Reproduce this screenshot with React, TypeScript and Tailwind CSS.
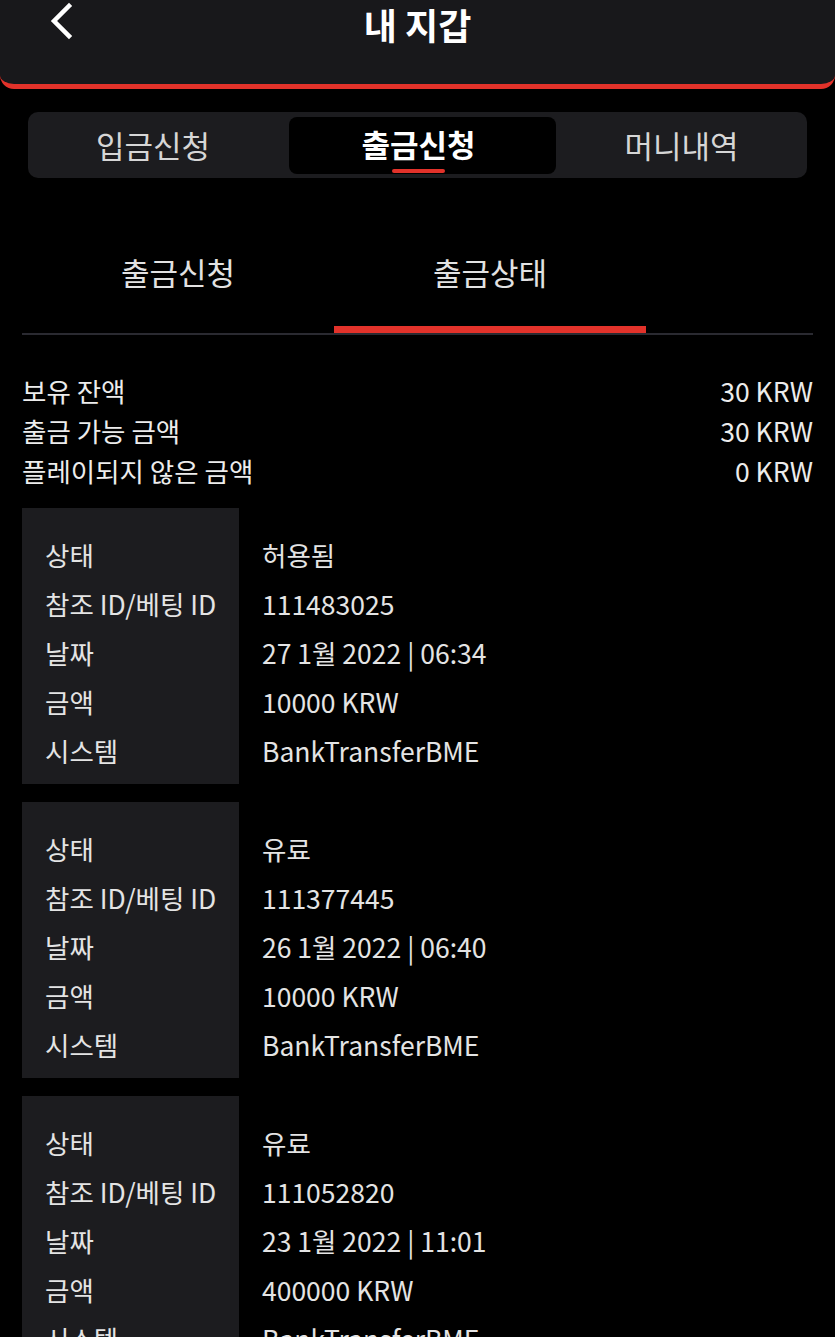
import React from 'react';

const font = { fontFamily: '"Noto Sans CJK KR", "Noto Sans", sans-serif' };

const balances = [
  { label: '보유 잔액', value: '30 KRW' },
  { label: '출금 가능 금액', value: '30 KRW' },
  { label: '플레이되지 않은 금액', value: '0 KRW' },
];

const records = [
  { status: '허용됨', id: '111483025', date: '27 1월 2022 | 06:34', amount: '10000 KRW', system: 'BankTransferBME' },
  { status: '유료', id: '111377445', date: '26 1월 2022 | 06:40', amount: '10000 KRW', system: 'BankTransferBME' },
  { status: '유료', id: '111052820', date: '23 1월 2022 | 11:01', amount: '400000 KRW', system: 'BankTransferBME' },
];

const labels = ['상태', '참조 ID/베팅 ID', '날짜', '금액', '시스템'];

const RecordCard = ({ r }: { r: (typeof records)[number] }) => {
  const values = [r.status, r.id, r.date, r.amount, r.system];
  return (
    <div className="flex text-[26.5px] text-[#e4e4e4]">
      <div className="w-[217px] shrink-0 bg-[#1c1c1f] pt-[22px] pb-[9px] pl-[23px]">
        {labels.map((l) => (
          <div key={l} className="h-[49px] leading-[49px] whitespace-nowrap">{l}</div>
        ))}
      </div>
      <div className="flex-1 pt-[22px] pb-[9px] pl-[23px]">
        {values.map((v, i) => (
          <div key={i} className="h-[49px] leading-[49px] whitespace-nowrap">{v}</div>
        ))}
      </div>
    </div>
  );
};

export default function App() {
  return (
    <div className="min-h-screen bg-black overflow-hidden" style={font}>
      {/* header */}
      <header className="h-[89px] bg-[#18181b] rounded-b-[14px] border-b-[5px] border-[#e2322a] flex items-start justify-center relative">
        <button className="absolute left-[46px] top-[1px] w-[30px] h-[40px] flex items-center justify-center">
          <svg width="24" height="38" viewBox="0 0 24 38" fill="none">
            <path d="M20 4 L5 19 L20 34" stroke="white" strokeWidth="4.5" strokeLinecap="square" />
          </svg>
        </button>
        <h1 className="text-[36px] font-bold text-white leading-[44px] mt-[2px]">내 지갑</h1>
      </header>

      {/* main tabs */}
      <div className="mx-[28px] mt-[23px] h-[66px] rounded-[10px] bg-[#1c1c1f] flex pt-[5px] pb-[4px]">
        <div className="w-[250px] flex items-center justify-center text-[31px] text-[#d6d6d6]">입금신청</div>
        <div className="ml-[11px] w-[267px] rounded-[8px] bg-black flex flex-col items-center pr-[8px]">
          <span className="flex-1 flex items-center text-[31px] font-bold text-white pt-[2px]">출금신청</span>
          <span className="w-[53px] h-[4px] rounded-full bg-[#e2322a] mb-[1px]" />
        </div>
        <div className="flex-1 flex items-center justify-center text-[31px] text-[#d6d6d6]">머니내역</div>
      </div>

      <div className="px-[22px]">
        {/* sub tabs */}
        <div className="mt-[42px] flex border-b-2 border-[#2a2a31]">
          <div className="w-[312px] h-[113px] flex flex-col items-center">
            <span className="pt-[32px] leading-[40px] text-[31px] text-[#e2e2e2]">출금신청</span>
          </div>
          <div className="w-[312px] h-[113px] flex flex-col items-center">
            <span className="pt-[32px] leading-[40px] text-[31px] text-[#e2e2e2]">출금상태</span>
            <span className="mt-auto w-full h-[7px] bg-[#e2322a]" />
          </div>
        </div>

        {/* balance */}
        <div className="mt-[36px]">
          {balances.map((b) => (
            <div key={b.label} className="flex justify-between h-[40px] leading-[40px] text-[26.5px] text-[#ececec]">
              <span>{b.label}</span>
              <span>{b.value}</span>
            </div>
          ))}
        </div>

        {/* records */}
        <div className="mt-[17px] flex flex-col gap-[18px]">
          {records.map((r) => (
            <RecordCard key={r.id} r={r} />
          ))}
        </div>
      </div>
    </div>
  );
}
